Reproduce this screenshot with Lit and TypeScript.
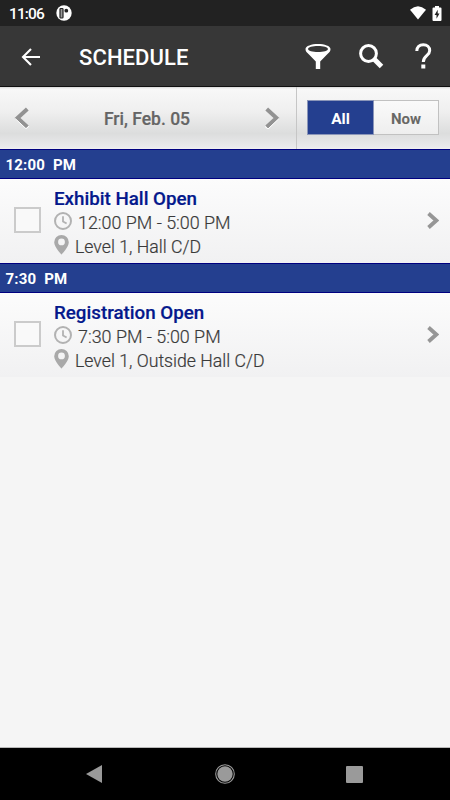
import { LitElement, html, css, svg } from "lit";
import { customElement, property } from "lit/decorators.js";

interface Session {
  slot: string;
  title: string;
  time: string;
  place: string;
}

const sessions: Session[] = [
  { slot: "12:00  PM", title: "Exhibit Hall Open", time: "12:00 PM - 5:00 PM", place: "Level 1, Hall C/D" },
  { slot: "7:30  PM", title: "Registration Open", time: "7:30 PM - 5:00 PM", place: "Level 1, Outside Hall C/D" },
];

const icon = (cls: string, w: number, h: number, body: unknown) =>
  html`<svg class=${cls} width=${w} height=${h} viewBox="0 0 ${w} ${h}" fill="none">${body}</svg>`;

@customElement("session-row")
export class SessionRow extends LitElement {
  @property({ attribute: false }) session!: Session;

  static styles = css`
    :host { display: block; }
    svg { display: block; flex: none; }
    .slot {
      box-sizing: border-box;
      height: 30px;
      padding-left: 5.5px;
      border-top: 1px solid #000080;
      border-bottom: 1px solid #000080;
      background: #243f8f;
      color: #fff;
      font: 700 15px/30px Roboto, sans-serif;
      letter-spacing: 0.2px;
      white-space: pre;
    }
    .row {
      box-sizing: border-box;
      height: 84px;
      display: flex;
      align-items: center;
      padding: 0 11px 0 14px;
      background: linear-gradient(#fcfcfc, #f1f1f2);
    }
    .check {
      box-sizing: border-box;
      width: 27px;
      height: 26px;
      margin-top: -2px;
      border: 2px solid #cbcbcb;
      background: #f9f9f9;
    }
    .info { flex: 1; height: 84px; padding: 7px 0 0 13px; box-sizing: border-box; }
    .title {
      height: 24px;
      font: 500 18.75px/26px Roboto, sans-serif;
      color: #04188c;
      -webkit-text-stroke: 0.2px #04188c;
      white-space: nowrap;
    }
    .line {
      display: flex;
      height: 24px;
      font: 300 17.9px/26px Roboto, sans-serif;
      color: #3a3a3a;
      -webkit-text-stroke: 0.2px #3a3a3a;
      white-space: nowrap;
    }
    .place { font-size: 17.7px; }
    .clock { margin: 2px 6px 0 0; }
    .pin { margin: 1px 6px 0 0; }
    .go { margin-top: -1px; }
  `;

  render() {
    const s = this.session;
    return html`
      <div class="slot">${s.slot}</div>
      <div class="row">
        <div class="check"></div>
        <div class="info">
          <div class="title">${s.title}</div>
          <div class="line">
            ${icon("clock", 18, 18, svg`<circle cx="9" cy="9" r="8" stroke="#b2b2b2" stroke-width="2"/><path d="M9 4.2V9.4L12.6 11.6" stroke="#b2b2b2" stroke-width="1.8"/>`)}
            <span>${s.time}</span>
          </div>
          <div class="line place">
            ${icon("pin", 15, 20, svg`<path fill-rule="evenodd" fill="#a9a9a9" d="M7.5 0A7.3 7.3 0 0 0 .2 7.2C.2 12 7.5 19.5 7.5 19.5S14.800 12 14.800 7.200A7.300 7.300 0 0 0 7.500 0ZM7.500 3.500A3.400 3.400 0 1 1 7.500 10.300A3.400 3.400 0 0 1 7.500 3.500Z"/>`)}
            <span>${s.place}</span>
          </div>
        </div>
        ${icon("go", 12, 17, svg`<path d="M1.500 1.500L9.300 8.500L1.500 15.500" stroke="#969696" stroke-width="3.800"/>`)}
      </div>
    `;
  }
}

@customElement("app-root")
export class AppRoot extends LitElement {
  static styles = css`
    :host {
      display: flex;
      flex-direction: column;
      width: 450px;
      height: 800px;
      overflow: hidden;
      background: #f5f5f5;
      font-family: Roboto, sans-serif;
    }
    svg { display: block; flex: none; }
    .status {
      flex: none;
      box-sizing: border-box;
      height: 26px;
      display: flex;
      align-items: center;
      padding: 0 8px 0 9px;
      background: #222;
      color: #fff;
    }
    .clock { width: 47px; font: 500 15.5px/26px Roboto, sans-serif; letter-spacing: -0.9px; padding-top: 2px; }
    .wifi { margin-left: auto; margin-right: 6px; }
    .header {
      flex: none;
      box-sizing: border-box;
      height: 61px;
      display: flex;
      align-items: center;
      padding: 0 18px 0 21px;
      border-bottom: 1px solid #111;
      background: #373737;
      color: #fff;
    }
    .name { flex: 1; padding: 4px 0 0 38px; font: 500 22px/30px Roboto, sans-serif; letter-spacing: 0.1px; }
    .arrow { margin-top: 2px; }
    .filter { margin: 1px 28px 0 0; }
    .search { margin: 1px 31px 0 0; }
    .help { margin-top: 0; }
    .bar {
      flex: none;
      height: 62px;
      display: flex;
      background: linear-gradient(#d8d8d8 0, #f8f8f8 2px, #efefef 40%, #dcdddd 75%, #eaeaec 97%, #f0f0f0 100%);
    }
    .dates {
      box-sizing: border-box;
      width: 297px;
      display: flex;
      align-items: center;
      justify-content: space-between;
      padding: 0 16px 0 14px;
      border-right: 1px solid #c6c6c6;
    }
    .day { padding-top: 2px; font: 500 17.5px/24px Roboto, sans-serif; color: #656565; -webkit-text-stroke: 0.2px #656565; }
    .modes {
      box-sizing: border-box;
      display: flex;
      width: 132px;
      height: 35px;
      margin: 13px 0 0 10px;
      border: 1px solid #c1c1c1;
      background: linear-gradient(#fafafa, #eee);
      font: 700 15px/36px Roboto, sans-serif;
      text-align: center;
      color: #686865;
    }
    .all { width: 65px; margin: -1px 0 -1px -1px; border: 1px solid #8b96b9; background: #243f8f; color: #fff; font-size: 15.5px; }
    .now { flex: 1; }
    .list { flex: 1; }
    .nav {
      flex: none;
      box-sizing: border-box;
      height: 53px;
      display: flex;
      align-items: center;
      border-top: 1px solid #b8b8b8;
      background: #000;
    }
    .back { margin-left: 85px; }
    .home { margin-left: 113px; }
    .recent { margin-left: 111px; }
  `;

  render() {
    return html`
      <div class="status">
        <span class="clock">11:06</span>
        ${icon("app", 16, 16, svg`<circle cx="8" cy="8" r="7.700" fill="#fff"/><rect x="4" y="3.500" width="3" height="9.500" rx=".8" fill="#999" stroke="#222" stroke-width="1.200"/><circle cx="10.300" cy="5.700" r="1.900" fill="#222"/>`)}
        ${icon("wifi", 16, 14, svg`<path fill="#fff" d="M0 3.700Q8-3.300 16 3.700L8 13.500Z"/>`)}
        ${icon("battery", 10, 15, svg`<path fill="#fff" d="M3 0H7V1.500H8.500Q9.500 1.500 9.500 2.500V14Q9.500 15 8.500 15H1.500Q.5 15 .5 14V2.500Q.5 1.500 1.500 1.500H3Z"/><path fill="#222" d="M5.700 3.800L2.600 9H4.500V12.700L7.500 7.500H5.700Z"/>`)}
      </div>
      <div class="header">
        ${icon("arrow", 20, 18, svg`<path d="M19 9H2M10 1L2 9L10 17" stroke="#fff" stroke-width="2.100"/>`)}
        <div class="name">SCHEDULE</div>
        ${icon("filter", 26, 25, svg`<path fill="#fff" fill-rule="evenodd" d="M13 0C19.500 0 25.500 2 25.500 5C25.500 7 24.500 8.500 22.500 10L15.200 17.500V25H10.800V17.500L3.500 10C1.500 8.500.5 7 .5 5C.5 2 6.500 0 13 0ZM13 2C7.500 2 3 3.300 3 5S7.500 8 13 8S23 6.700 23 5S18.500 2 13 2Z"/>`)}
        ${icon("search", 25, 25, svg`<circle cx="9.500" cy="9.500" r="7.900" stroke="#fff" stroke-width="3"/><path d="M14.800 14.800L22.500 22.500" stroke="#fff" stroke-width="5"/>`)}
        ${icon("help", 17, 26, svg`<path d="M1.800 8C1.800 4 4.500 1.700 8.300 1.700S14.700 4 14.700 7.500C14.700 13 8.300 12.500 8.300 19" stroke="#fff" stroke-width="3"/><rect x="6.300" y="21.500" width="4" height="4" fill="#fff"/>`)}
      </div>
      <div class="bar">
        <div class="dates">
          ${icon("prev", 16, 22, svg`<path d="M13.300 2L3.500 11L13.300 20" stroke="#929292" stroke-width="4"/><path d="M1.200 11.500L12 21.700L15 19.200" stroke="#fff" stroke-width="1"/>`)}
          <span class="day">Fri, Feb. 05</span>
          ${icon("next", 16, 22, svg`<path d="M2.700 2L12.500 11L2.700 20" stroke="#929292" stroke-width="4"/><path d="M1 19.500L4 22L15 11.500" stroke="#fff" stroke-width="1"/>`)}
        </div>
        <div class="modes"><div class="all">All</div><div class="now">Now</div></div>
      </div>
      <div class="list">${sessions.map((s) => html`<session-row .session=${s}></session-row>`)}</div>
      <div class="nav">
        ${icon("back", 17, 18, svg`<path fill="#9a9a9a" d="M17 0V18L1 9Z"/>`)}
        ${icon("home", 20, 20, svg`<circle cx="10" cy="10" r="9.300" stroke="#9a9a9a" stroke-width="1.100"/><circle cx="10" cy="10" r="7.700" fill="#9a9a9a"/>`)}
        ${icon("recent", 17, 17, svg`<rect width="17" height="17" rx="1" fill="#9a9a9a"/>`)}
      </div>
    `;
  }
}
